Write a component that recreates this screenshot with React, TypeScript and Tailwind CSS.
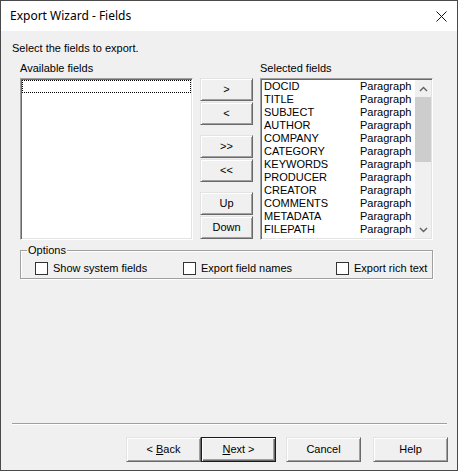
import React from 'react';

const selected = [
  'DOCID',
  'TITLE',
  'SUBJECT',
  'AUTHOR',
  'COMPANY',
  'CATEGORY',
  'KEYWORDS',
  'PRODUCER',
  'CREATOR',
  'COMMENTS',
  'METADATA',
  'FILEPATH',
  'DATE',
];

const raised =
  'bg-[#f0f0f0] border border-t-[#e3e3e3] border-l-[#e3e3e3] border-r-[#696969] border-b-[#696969] shadow-[inset_1px_1px_0_#ffffff,inset_-1px_-1px_0_#a0a0a0]';

const sunken =
  'bg-white border border-t-[#a0a0a0] border-l-[#a0a0a0] border-r-white border-b-white shadow-[inset_1px_1px_0_#696969,inset_-1px_-1px_0_#e3e3e3]';

const SideButton: React.FC<{ label: string; className?: string }> = ({ label, className = '' }) => (
  <div className={`${raised} h-[23px] flex items-center justify-center ${className}`}>{label}</div>
);

const FooterButton: React.FC<{ children: React.ReactNode; isDefault?: boolean; className?: string }> = ({
  children,
  isDefault = false,
  className = '',
}) => (
  <div
    className={`w-[75px] h-[25px] flex items-center justify-center ${
      isDefault
        ? 'bg-[#f0f0f0] border border-[#1a1a1a] shadow-[inset_1px_1px_0_#ffffff,inset_-1px_-1px_0_#696969,inset_-2px_-2px_0_#a0a0a0]'
        : raised
    } ${className}`}
  >
    {children}
  </div>
);

const Check: React.FC<{ label: string; className?: string }> = ({ label, className = '' }) => (
  <div className={`flex items-center gap-[5px] h-[13px] ${className}`}>
    <div className="w-[13px] h-[13px] bg-white border border-[#333333] shrink-0" />
    <span className="whitespace-nowrap">{label}</span>
  </div>
);

const Chevron: React.FC<{ up?: boolean }> = ({ up = false }) => (
  <svg width="9" height="6" viewBox="0 0 9 6">
    <polyline
      points={up ? '1,5 4.5,1.5 8,5' : '1,1 4.5,4.5 8,1'}
      fill="none"
      stroke="#606060"
      strokeWidth="1.4"
    />
  </svg>
);

export default function App() {
  return (
    <div className="w-[458px] h-[471px] border border-[#4a4a4a] bg-[#f0f0f0] flex flex-col text-black font-['Liberation_Sans',Arial,sans-serif] text-[11px] leading-[13px] overflow-hidden">
      {/* title bar */}
      <div className="h-[30px] bg-white flex items-center justify-between pl-[9px] pr-[10px] shrink-0">
        <span className="font-['Noto_Sans',sans-serif] text-[12px] leading-[16px] mt-[-1px]">Export Wizard - Fields</span>
        <svg width="11" height="11" viewBox="0 0 11 11">
          <path d="M0.5 0.5 L10.5 10.5 M10.5 0.5 L0.5 10.5" stroke="#111" strokeWidth="1" />
        </svg>
      </div>

      <div className="flex-1 flex flex-col">
        <div className="ml-[11px] mt-[11px]">Select the fields to export.</div>

        <div className="flex ml-[19px] mt-[7px] gap-[7px]">
          <div className="w-[173px]">
            <div>Available fields</div>
            <div className={`${sunken} mt-[3px] h-[162px] p-[1px]`}>
              <div className="h-[13px] border border-dotted border-black" />
            </div>
          </div>

          <div className="w-[53px] pt-[16px] flex flex-col gap-[1px]">
            <SideButton label=">" />
            <SideButton label="<" />
            <SideButton label=">>" className="mt-[9px]" />
            <SideButton label="<<" />
            <SideButton label="Up" className="mt-[9px]" />
            <SideButton label="Down" />
          </div>

          <div className="w-[173px]">
            <div>Selected fields</div>
            <div className={`${sunken} mt-[3px] h-[162px] p-[1px] flex`}>
              <div className="flex-1 overflow-hidden pl-[2px]">
                {selected.map((f) => (
                  <div key={f} className="flex h-[13px]">
                    <span className="w-[96px] shrink-0">{f}</span>
                    <span>Paragraph</span>
                  </div>
                ))}
              </div>
              <div className="w-[16px] flex flex-col bg-[#f0f0f0]">
                <div className="h-[17px] flex items-center justify-center">
                  <Chevron up />
                </div>
                <div className="flex-1">
                  <div className="h-[65px] bg-[#cdcdcd]" />
                </div>
                <div className="h-[17px] flex items-center justify-center">
                  <Chevron />
                </div>
              </div>
            </div>
          </div>
        </div>

        <fieldset className="ml-[19px] mt-[4px] w-[413px] border border-[#a0a0a0] shadow-[inset_1px_1px_0_#ffffff,1px_1px_0_#ffffff] pb-[3px]">
          <legend className="ml-[6px] px-[1px]">Options</legend>
          <div className="flex mt-[5px] ml-[14px]">
            <Check label="Show system fields" className="w-[148px]" />
            <Check label="Export field names" className="w-[153px]" />
            <Check label="Export rich text" />
          </div>
        </fieldset>

        <div className="flex-1" />

        <div className="ml-[11px] w-[435px] h-[2px] border-t border-[#a0a0a0] bg-white" />

        <div className="flex justify-end items-center pr-[9px] mt-[12px] mb-[8px]">
          <FooterButton>
            <span>
              &lt; <span className="underline">B</span>ack
            </span>
          </FooterButton>
          <FooterButton isDefault>
            <span>
              <span className="underline">N</span>ext &gt;
            </span>
          </FooterButton>
          <FooterButton className="ml-[10px]">Cancel</FooterButton>
          <FooterButton className="ml-[12px]">Help</FooterButton>
        </div>
      </div>
    </div>
  );
}
